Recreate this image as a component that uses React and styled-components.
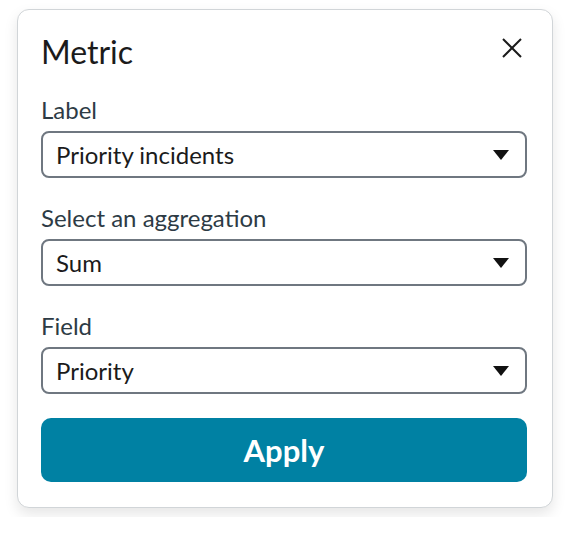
import React from 'react';
import styled, { createGlobalStyle } from 'styled-components';

const GlobalStyle = createGlobalStyle`
  body {
    margin: 0;
    background: #ffffff;
    font-family: Lato, "Noto Sans", sans-serif;
  }
`;

const Page = styled.div`
  padding: 9px 17px;
`;

const Card = styled.div`
  width: 536px;
  box-sizing: border-box;
  border: 1px solid #d1d5d8;
  border-radius: 12px;
  background: #fff;
  box-shadow: 0 6px 14px rgba(0, 0, 0, 0.1);
  padding: 21px 25px 25px 23px;
`;

const Header = styled.div`
  display: flex;
  align-items: center;
  justify-content: space-between;
  margin-bottom: 22px;
`;

const Title = styled.h2`
  margin: 0;
  font-size: 32px;
  font-weight: 400;
  line-height: 42px;
  color: #1b1b1b;
`;

const CloseButton = styled.button`
  border: 0;
  background: none;
  padding: 0;
  width: 24px;
  height: 24px;
  display: flex;
  align-items: center;
  justify-content: center;
  cursor: pointer;
  margin: 0 3px 8px 0;
`;

const Field = styled.div`
  display: flex;
  flex-direction: column;
  gap: 6px;
  margin-bottom: 25px;

  &:last-of-type {
    margin-bottom: 24px;
  }
`;

const Label = styled.label`
  font-size: 24px;
  line-height: 30px;
  color: #2d3b45;
`;

const SelectBox = styled.div`
  height: 47px;
  box-sizing: border-box;
  border: 2px solid #6f7780;
  border-radius: 8px;
  display: flex;
  align-items: center;
  justify-content: space-between;
  padding: 0 16px 0 13px;
  font-size: 24px;
  color: #1b1b1b;
`;

const Caret = styled.span`
  width: 0;
  height: 0;
  border-left: 8px solid transparent;
  border-right: 8px solid transparent;
  border-top: 10px solid #111;
`;

const ApplyButton = styled.button`
  display: block;
  width: 100%;
  height: 64px;
  border: 0;
  border-radius: 10px;
  background: #0081a3;
  color: #fff;
  font-family: Lato, "Noto Sans", sans-serif;
  font-size: 31px;
  font-weight: 700;
  cursor: pointer;
`;

const fields = [
  { label: 'Label', value: 'Priority incidents' },
  { label: 'Select an aggregation', value: 'Sum' },
  { label: 'Field', value: 'Priority' },
];

export default function App() {
  return (
    <>
      <GlobalStyle />
      <Page>
        <Card>
          <Header>
            <Title>Metric</Title>
            <CloseButton aria-label="Close">
              <svg width="22" height="22" viewBox="0 0 22 22">
                <path d="M2 2L20 20M20 2L2 20" stroke="#1b1b1b" strokeWidth="2" fill="none" />
              </svg>
            </CloseButton>
          </Header>
          {fields.map((f) => (
            <Field key={f.label}>
              <Label>{f.label}</Label>
              <SelectBox>
                <span>{f.value}</span>
                <Caret />
              </SelectBox>
            </Field>
          ))}
          <ApplyButton>Apply</ApplyButton>
        </Card>
      </Page>
    </>
  );
}
